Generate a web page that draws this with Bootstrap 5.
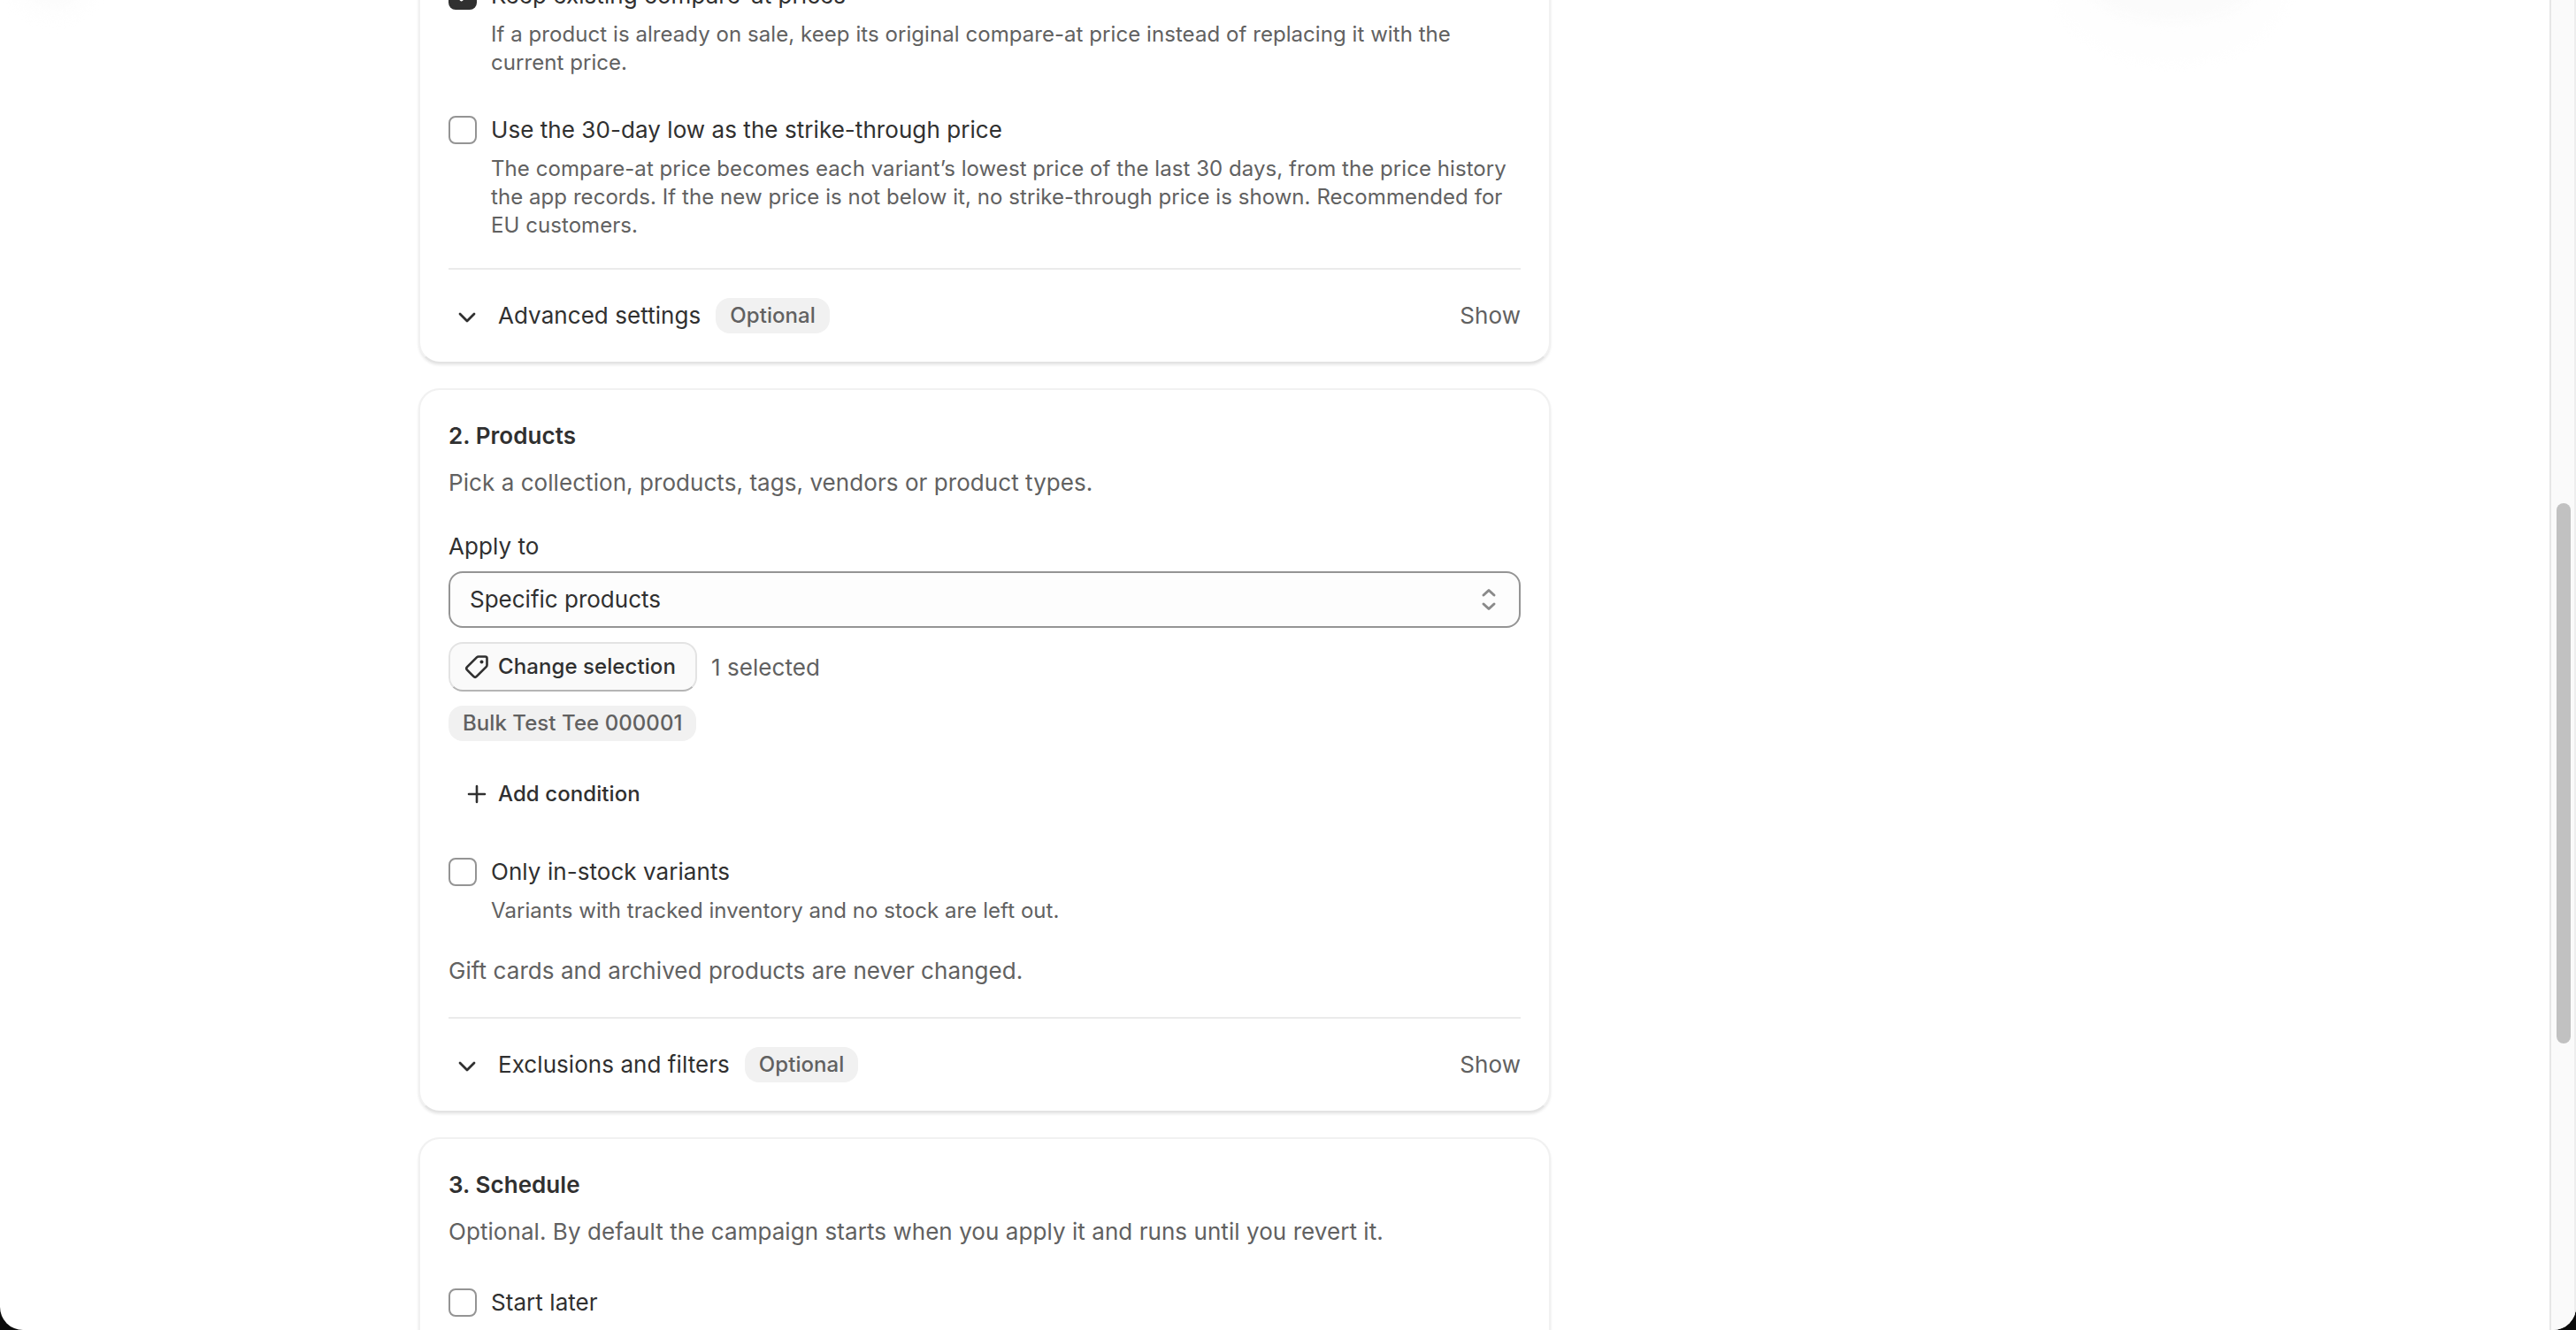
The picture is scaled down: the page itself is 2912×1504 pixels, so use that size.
<!DOCTYPE html>
<html lang="en">
<head>
<meta charset="utf-8">
<title>Campaign</title>
<link rel="stylesheet" href="https://cdn.jsdelivr.net/npm/bootstrap@5.3.0/dist/css/bootstrap.min.css">
<style>
html,body{height:100%;margin:0;background:#0b0b0b;overflow:hidden}
body{font-family:"Inter","Liberation Sans",sans-serif;color:#303030;letter-spacing:.06px}
.app-win{height:1504px;background:#fff;border-radius:0 0 26px 26px;overflow:hidden;position:relative}
.page-scroll{width:2882px;height:1504px;overflow:hidden;padding-left:473px}
.side-bar{width:30px;background:#fafafa;border-left:2px solid #e6e6e6;border-right:2px solid #ededed;position:relative;flex:none}
.side-thumb{position:absolute;left:6px;top:569px;width:16px;height:611px;border-radius:8px;background:#c1c1c1}
.col-form{width:1280px;margin-top:-59px;display:flex;flex-direction:column;gap:28px}
.sec-card{border:2px solid #f1f1f1;border-bottom-color:#e3e3e3;border-radius:24px;padding:32px 32px 0;box-shadow:0 2px 3px rgba(0,0,0,.09);background:#fff;--bs-card-bg:#fff}
.sec-card-open{min-height:400px}
.sec-title{font-size:26px;font-weight:570;line-height:40px;margin:0;color:#303030;letter-spacing:.06px}
.sec-sub{font-size:26px;line-height:40px;color:#616161;margin:13px 0 0}
.chk-row{display:flex;align-items:center;gap:16px;font-size:26px;line-height:40px;color:#303030;margin:0;padding:0}
.chk-row .form-check-input{width:32px;height:32px;margin:0;border:2px solid #949494;border-radius:8px;flex:none;float:none;box-shadow:none}
.chk-row .form-check-input:checked{background-color:#303030;border-color:#303030}
.chk-help{font-size:24px;line-height:32px;color:#616161;margin:8px 0 0 48px}
.hair{border-top:2px solid #ebebeb;opacity:1;margin:32px 0 0}
.sp-32{margin-top:32px}
.sp-40{margin-top:40px}
.sp-48{margin-top:48px}
.fold-row{display:flex;align-items:center;height:104px;font-size:26px;line-height:40px;color:#303030}
.fold-ico{width:20px;height:20px;margin:3px 0 0 11px;flex:none}
.fold-name{margin-left:25px}
.tag-chip{background:#f1f1f1;color:#616161;font-size:24px;font-weight:500;line-height:40px;height:40px;border-radius:16px;padding:0 16px;display:inline-block}
.fold-row .tag-chip{margin-left:17px}
.fold-show{margin-left:auto;color:#616161}
.fld-label{font-size:26px;line-height:40px;color:#303030;margin:32px 0 8px;display:block}
.form-select.pick-sel{height:64px;font-size:26px;line-height:40px;color:#303030;padding:0 64px 0 22px;border:2px solid #949494;border-radius:16px;background-color:#fdfdfd;background-size:24px 32px;background-position:right 22px center;background-image:url("data:image/svg+xml,%3csvg xmlns='http://www.w3.org/2000/svg' viewBox='0 0 24 32'%3e%3cpath fill='none' stroke='%238a8a8a' stroke-width='3' stroke-linecap='round' stroke-linejoin='round' d='M6 11 L12 5.500 L18 11 M6 21 L12 26.500 L18 21'/%3e%3c/svg%3e")}
.btn.pick-btn{height:56px;width:281px;padding:0 0 0 14px;background:#fafafa;border:2px solid #e3e3e3;border-bottom-color:#b5b5b5;border-radius:16px;font-size:24px;font-weight:550;color:#303030;letter-spacing:.08px;display:flex;align-items:center;justify-content:flex-start;gap:8px}
.pick-count{font-size:26px;color:#616161}
.add-cond{background:none;border:0;padding:0 0 0 20px;font-size:24px;font-weight:550;color:#303030;letter-spacing:.08px;display:flex;align-items:center;gap:12px;line-height:40px}
.ghost-blob{position:absolute;border-radius:50%;filter:blur(6px)}
.ghost-a1{left:2317px;top:-130px;width:276px;height:203px;background:#fefefe}
.ghost-a2{left:2360px;top:-60px;width:190px;height:84px;background:#fbfbfb}
.ghost-b1{left:10px;top:-40px;width:100px;height:64px;background:#fefefe}
.ghost-b2{left:35px;top:-20px;width:50px;height:26px;background:#fbfbfb}
</style>
</head>
<body>
<div class="app-win d-flex">
  <main class="page-scroll">
    <div class="col-form">
      <section class="card sec-card">
        <div class="chk-row"><input class="form-check-input" type="checkbox" checked aria-label="Keep existing"><span>Keep existing compare-at prices</span></div>
        <p class="chk-help">If a product is already on sale, keep its original compare-at price instead of replacing it with the current price.</p>
        <div class="chk-row sp-40"><input class="form-check-input" type="checkbox" aria-label="30-day low"><span>Use the 30-day low as the strike-through price</span></div>
        <p class="chk-help">The compare-at price becomes each variant’s lowest price of the last 30 days, from the price history the app records. If the new price is not below it, no strike-through price is shown. Recommended for EU customers.</p>
        <hr class="hair">
        <div class="fold-row">
          <svg class="fold-ico" viewBox="0 0 20 20" aria-hidden="true"><path d="M2 6l8 8 8-8" fill="none" stroke="#303030" stroke-width="2.800" stroke-linecap="round" stroke-linejoin="round"/></svg>
          <span class="fold-name">Advanced settings</span><span class="tag-chip">Optional</span><span class="fold-show">Show</span>
        </div>
      </section>

      <section class="card sec-card">
        <h2 class="sec-title">2. Products</h2>
        <p class="sec-sub">Pick a collection, products, tags, vendors or product types.</p>
        <label class="fld-label" for="applyto">Apply to</label>
        <select id="applyto" class="form-select pick-sel"><option>Specific products</option></select>
        <div class="d-flex align-items-center gap-3 mt-3">
          <button type="button" class="btn pick-btn">
            <svg width="32" height="32" viewBox="0 0 32 32" aria-hidden="true"><path d="M18 4.500h7.500a2 2 0 0 1 2 2V14a3 3 0 0 1-.9 2.100L15.800 26.900a2.500 2.500 0 0 1-3.500 0L5.100 19.700a2.500 2.500 0 0 1 0-3.500L15.900 5.400A3 3 0 0 1 18 4.500z" fill="none" stroke="#303030" stroke-width="2.600" stroke-linejoin="round"/><circle cx="21.500" cy="10.500" r="2" fill="#303030"/></svg>
            <span>Change selection</span>
          </button>
          <span class="pick-count">1 selected</span>
        </div>
        <div class="mt-3"><span class="tag-chip">Bulk Test Tee 000001</span></div>
        <button type="button" class="add-cond sp-40">
          <svg width="24" height="24" viewBox="0 0 24 24" aria-hidden="true"><path d="M12 3v18M3 12h18" stroke="#303030" stroke-width="2.600" stroke-linecap="round"/></svg>
          <span>Add condition</span>
        </button>
        <div class="chk-row sp-48"><input class="form-check-input" type="checkbox" aria-label="Only in-stock"><span>Only in-stock variants</span></div>
        <p class="chk-help">Variants with tracked inventory and no stock are left out.</p>
        <p class="sec-sub sp-32">Gift cards and archived products are never changed.</p>
        <hr class="hair">
        <div class="fold-row">
          <svg class="fold-ico" viewBox="0 0 20 20" aria-hidden="true"><path d="M2 6l8 8 8-8" fill="none" stroke="#303030" stroke-width="2.800" stroke-linecap="round" stroke-linejoin="round"/></svg>
          <span class="fold-name">Exclusions and filters</span><span class="tag-chip">Optional</span><span class="fold-show">Show</span>
        </div>
      </section>

      <section class="card sec-card sec-card-open">
        <h2 class="sec-title">3. Schedule</h2>
        <p class="sec-sub">Optional. By default the campaign starts when you apply it and runs until you revert it.</p>
        <div class="chk-row sp-40"><input class="form-check-input" type="checkbox" aria-label="Start later"><span>Start later</span></div>
      </section>
    </div>
  </main>
  <div class="ghost-blob ghost-a1"></div>
  <div class="ghost-blob ghost-a2"></div>
  <div class="ghost-blob ghost-b1"></div>
  <div class="ghost-blob ghost-b2"></div>
  <div class="side-bar"><div class="side-thumb"></div></div>
</div>
<script src="https://cdn.jsdelivr.net/npm/bootstrap@5.3.0/dist/js/bootstrap.bundle.min.js"></script>
</body>
</html>
